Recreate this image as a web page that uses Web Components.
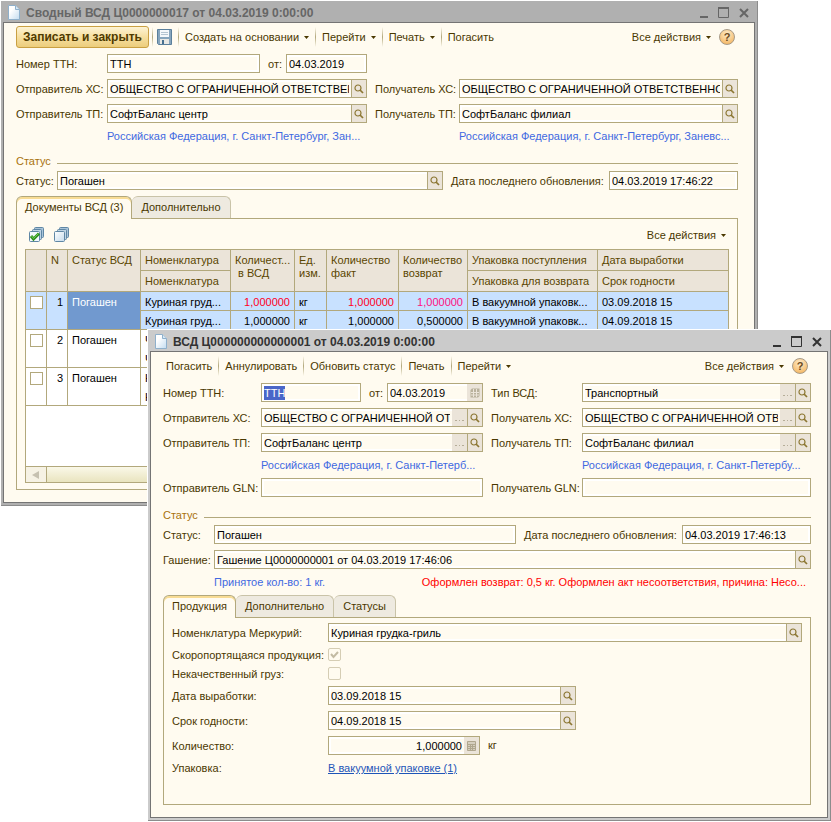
<!DOCTYPE html>
<html lang="ru">
<head>
<meta charset="utf-8">
<title>Сводный ВСД</title>
<style>
  html, body {
    height: 100%;
    margin: 0;
  }

  body {
    background: white;
    color: #4a3800;
    font: 11px/14px "Liberation Sans", Arial, sans-serif;
    overflow: hidden;
    position: relative;
    --line: #b2a87c;
    --paper: #fffbf0;
    --button: #ebe4d9;
  }

  /* two overlapping windows on the desktop */
  #summary {
    left: 1px;
    position: absolute;
    right: 73px;
    top: 1px;
  }

  #document {
    left: 148px;
    position: absolute;
    right: 0;
    top: 330px;
  }

  .columns {
    display: grid;
    gap: 6px 8px;
    grid-template-columns: minmax(0, 1fr) minmax(0, 1fr);
  }

  #summary .columns {
    grid-template-columns: minmax(0, 351fr) minmax(0, 363fr);
  }

  .row {
    display: flex;
    gap: 8px;
  }

  .row > .grow {
    flex: 1;
  }

  .row > .date {
    flex: none;
    --label: 18px;
  }

  .row > .updated {
    flex: none;
    width: 287px;
    --label: 158px;
  }

  .stack {
    display: flex;
    flex-direction: column;
    gap: 6px;
  }

  #summary .left { --label: 91px; }
  #summary .right { --label: 84px; }
  #summary .date { width: 99px; }
  #summary .state { --label: 41px; }
  #document .left { --label: 98px; }
  #document .right { --label: 91px; }
  #document .date { width: 114px; }
  #document .state { --label: 51px; }
  #document .product { --label: 156px; }

  .product .half { width: 404px; }
  .product .quantity { width: 308px; }

  .unit {
    line-height: 19px;
  }

  .notes {
    display: flex;
    justify-content: space-between;
    padding: 0 5px 0 51px;
  }
</style>
</head>
<body>

<app-window id="summary" inactive caption="Сводный ВСД Ц0000000017 от 04.03.2019 0:00:00">
  <tool-bar>
    <tool-button primary>Записать и закрыть</tool-button>
    <tool-button divided icon="save" label="Записать"></tool-button>
    <tool-button divided menu>Создать на основании</tool-button>
    <tool-button divided menu>Перейти</tool-button>
    <tool-button divided menu>Печать</tool-button>
    <tool-button divided>Погасить</tool-button>
    <tool-button slot="end" menu>Все действия</tool-button>
    <help-button slot="end"></help-button>
  </tool-bar>
  <div class="columns">
    <div class="row">
      <form-field class="left grow" label="Номер ТТН:" value="ТТН"></form-field>
      <form-field class="date" label="от:" value="04.03.2019"></form-field>
    </div>
    <span></span>
    <form-field class="left" label="Отправитель ХС:" value="ОБЩЕСТВО С ОГРАНИЧЕННОЙ ОТВЕТСТВЕННОСТЬЮ" buttons="find"></form-field>
    <form-field class="right" label="Получатель ХС:" value="ОБЩЕСТВО С ОГРАНИЧЕННОЙ ОТВЕТСТВЕННОСТЬЮ" buttons="find"></form-field>
    <form-field class="left" label="Отправитель ТП:" value="СофтБаланс центр" buttons="find"></form-field>
    <form-field class="right" label="Получатель ТП:" value="СофтБаланс филиал" buttons="find"></form-field>
    <note-link class="left">Российская Федерация, г. Санкт-Петербург, Зан...</note-link>
    <note-link class="right">Российская Федерация, г. Санкт-Петербург, Заневс...</note-link>
  </div>
  <field-group caption="Статус">
    <div class="row">
      <form-field class="state grow" label="Статус:" value="Погашен" buttons="find"></form-field>
      <form-field class="updated" label="Дата последнего обновления:" value="04.03.2019 17:46:22"></form-field>
    </div>
  </field-group>
  <tab-panel tabs="Документы ВСД (3)|Дополнительно">
    <tool-bar inner>
      <tool-button icon="checkAll" label="Выбрать все"></tool-button>
      <tool-button icon="uncheckAll" label="Снять выбор"></tool-button>
      <tool-button slot="end" menu>Все действия</tool-button>
    </tool-bar>
    <document-list></document-list>
  </tab-panel>
</app-window>

<app-window id="document" caption="ВСД Ц000000000000001 от 04.03.2019 0:00:00">
  <tool-bar flush>
    <tool-button>Погасить</tool-button>
    <tool-button divided>Аннулировать</tool-button>
    <tool-button divided>Обновить статус</tool-button>
    <tool-button divided>Печать</tool-button>
    <tool-button divided menu>Перейти</tool-button>
    <tool-button slot="end" menu>Все действия</tool-button>
    <help-button slot="end"></help-button>
  </tool-bar>
  <div class="columns">
    <div class="row">
      <form-field class="left grow" label="Номер ТТН:" value="ТТН" selected></form-field>
      <form-field class="date" label="от:" value="04.03.2019" buttons="calendar"></form-field>
    </div>
    <form-field class="right" label="Тип ВСД:" value="Транспортный" buttons="more find"></form-field>
    <form-field class="left" label="Отправитель ХС:" value="ОБЩЕСТВО С ОГРАНИЧЕННОЙ ОТВЕТСТВЕННОСТЬЮ" buttons="more find"></form-field>
    <form-field class="right" label="Получатель ХС:" value="ОБЩЕСТВО С ОГРАНИЧЕННОЙ ОТВЕТСТВЕННОСТЬЮ" buttons="more find"></form-field>
    <form-field class="left" label="Отправитель ТП:" value="СофтБаланс центр" buttons="more find"></form-field>
    <form-field class="right" label="Получатель ТП:" value="СофтБаланс филиал" buttons="more find"></form-field>
    <note-link class="left">Российская Федерация, г. Санкт-Петерб...</note-link>
    <note-link class="right">Российская Федерация, г. Санкт-Петербу...</note-link>
    <form-field class="left" label="Отправитель GLN:" value=""></form-field>
    <form-field class="right" label="Получатель GLN:" value=""></form-field>
  </div>
  <field-group caption="Статус">
    <div class="row">
      <form-field class="state grow" label="Статус:" value="Погашен"></form-field>
      <form-field class="updated" label="Дата последнего обновления:" value="04.03.2019 17:46:13"></form-field>
    </div>
    <form-field class="state" label="Гашение:" value="Гашение Ц0000000001 от 04.03.2019 17:46:06" buttons="find"></form-field>
    <div class="notes">
      <note-link style="--label: 0px">Принятое кол-во: 1 кг.</note-link>
      <note-link style="--label: 0px" warning>Оформлен возврат: 0,5 кг. Оформлен акт несоответствия, причина: Несо...</note-link>
    </div>
  </field-group>
  <tab-panel tabs="Продукция|Дополнительно|Статусы" roomy>
    <div class="stack product">
      <form-field label="Номенклатура Меркурий:" value="Куриная грудка-гриль" buttons="find"></form-field>
      <check-field label="Скоропортящаяся продукция:" checked></check-field>
      <check-field label="Некачественный груз:"></check-field>
      <form-field class="half" label="Дата выработки:" value="03.09.2018 15" buttons="find"></form-field>
      <form-field class="half" label="Срок годности:" value="04.09.2018 15" buttons="find"></form-field>
      <div class="row">
        <form-field class="quantity" label="Количество:" value="1,000000" buttons="calculator" numeric></form-field>
        <span class="unit">кг</span>
      </div>
      <note-link label="Упаковка:" underlined>В вакуумной упаковке (1)</note-link>
    </div>
  </tab-panel>
</app-window>

<script>
const icons = {
  page: `<svg width="12" height="15" viewBox="0 0 12 15">
    <defs><linearGradient id="p" x2="1" y2="1"><stop offset=".3" stop-color="#fff"/><stop offset="1" stop-color="#c3dcf0"/></linearGradient></defs>
    <path d="M.5.5h7l4 4v10H.5z" fill="url(#p)" stroke="#8fb0cb"/>
    <path d="M7.500.5v4h4" fill="#d7e8f5" stroke="#8fb0cb"/></svg>`,
  save: `<svg width="16" height="16" viewBox="0 0 16 16">
    <path d="M.5.5h14v15H1.500l-1-1z" fill="#86a5bd" stroke="#5a7f9b"/>
    <path d="M3 1h9v7H3z" fill="#f4f8fb"/>
    <path d="M4 3.500h7M4 5.500h7" stroke="#b4c5d2"/>
    <path d="M3 10h9v5H3z" fill="#e8e8e4"/>
    <path d="M5 11h2v4H5z" fill="#47708f"/></svg>`,
  checkAll: `<svg width="16" height="16" viewBox="0 0 16 16">
    <rect x="5.500" y=".5" width="9" height="10" rx="1" fill="#a9c4d9" stroke="#5f87a5"/>
    <rect x="3.500" y="2.500" width="9" height="10" rx="1" fill="#bfd4e4" stroke="#5f87a5"/>
    <rect x=".5" y="4.500" width="10" height="10" rx="1" fill="#f3f9fd" stroke="#5f87a5"/>
    <path d="M2 9l2.500 3L10 6.500" fill="none" stroke="#2f8f1f" stroke-width="3"/>
    <path d="M2.500 9l2 2.500L9.500 6.500" fill="none" stroke="#6fce50"/></svg>`,
  uncheckAll: `<svg width="16" height="16" viewBox="0 0 16 16">
    <defs><linearGradient id="u" x2="1" y2="1"><stop stop-color="#fff"/><stop offset="1" stop-color="#c5dbec"/></linearGradient></defs>
    <rect x="5.500" y=".5" width="9" height="10" rx="1" fill="#a9c4d9" stroke="#5f87a5"/>
    <rect x="3.500" y="2.500" width="9" height="10" rx="1" fill="#bfd4e4" stroke="#5f87a5"/>
    <rect x=".5" y="4.500" width="10" height="10" rx="1" fill="url(#u)" stroke="#5f87a5"/></svg>`,
  find: `<svg width="10" height="10" viewBox="0 0 10 10" fill="none" stroke="#8c7733">
    <circle cx="4" cy="4" r="3" stroke-width="1.200"/><path d="M6 6l3 3" stroke-width="1.700"/></svg>`,
  more: `<svg width="9" height="9" viewBox="0 0 9 9"><path d="M0 7h2v1H0zM4 7h1v1H4zM7 7h2v1H7z" fill="#b5ad98"/></svg>`,
  calendar: `<svg width="10" height="10" viewBox="0 0 10 10">
    <path d="M2 .5h7.500V8L8 9.500H.5V2z" fill="#b9b19c"/>
    <path d="M1 4.500h8M1 7h8M3.500 1v8M6.500 1v8" stroke="#ebe4d9"/></svg>`,
  calculator: `<svg width="9" height="10" viewBox="0 0 9 10">
    <path d="M.5.5h8v9h-8z" fill="#d6cfbf" stroke="#b0a78e"/>
    <path d="M1 3.500h7M1 5.500h7M1 7.500h7M3.500 4v5M5.500 4v5" stroke="#b0a78e"/></svg>`,
  arrow: `<svg width="5" height="3" viewBox="0 0 5 3"><path d="M0 0h5L2.500 3z" fill="#4a3800"/></svg>`
};

const buttonNames = {
  find: 'Открыть',
  more: 'Выбрать',
  calendar: 'Календарь',
  calculator: 'Калькулятор'
};

class AppWindow extends HTMLElement {
  constructor() {
    super();

    const shadowRoot = this.attachShadow({mode: 'open'});
    shadowRoot.innerHTML = `
      <style>
        :host {
          background: #cbcbcb;
          border-bottom: 1px solid #8c8c8c;
          border-right: 1px solid #8c8c8c;
          box-shadow: 0 0 0 1px white;
          box-sizing: border-box;
          color: #333;
          display: block;
          padding: 0 2px 2px;
        }

        :host([inactive]) {
          background: #b0b0b0;
          color: #666;
        }

        header {
          align-items: center;
          display: flex;
          gap: 6px;
          height: 21px;
          padding: 2px 5px 0;
          box-sizing: border-box;
        }

        h1 {
          flex: 1;
          font-size: 12px;
          line-height: 16px;
          margin: 0;
          white-space: nowrap;
        }

        header button {
          background: none;
          border: none;
          color: inherit;
          display: flex;
          height: 12px;
          padding: 0;
          width: 12px;
        }

        .controls {
          display: flex;
          gap: 8px;
        }

        main {
          background: var(--paper);
          border: 1px solid #747474;
          color: #4a3800;
          display: flex;
          flex-direction: column;
          gap: 6px;
          padding: 3px 16px 12px 12px;
        }
      </style>
      <header>
        ${icons.page}
        <h1></h1>
        <div class="controls">
          <button aria-label="Свернуть"><svg width="12" height="12"><path d="M2 10h8" stroke="currentColor" stroke-width="2"/></svg></button>
          <button aria-label="Развернуть"><svg width="12" height="12"><path d="M.5 1.500h10v9H.5z" fill="none" stroke="currentColor"/><path d="M0 1h11" stroke="currentColor" stroke-width="2"/></svg></button>
          <button aria-label="Закрыть"><svg width="12" height="12"><path d="M2 2l8 8M10 2l-8 8" stroke="currentColor" stroke-width="2"/></svg></button>
        </div>
      </header>
      <main><slot></slot></main>
    `;
    shadowRoot.querySelector('h1').textContent = this.getAttribute('caption');
  }
}

class ToolBar extends HTMLElement {
  constructor() {
    super();

    const shadowRoot = this.attachShadow({mode: 'open'});
    shadowRoot.innerHTML = `
      <style>
        :host {
          align-items: center;
          display: flex;
          height: 22px;
          justify-content: space-between;
          padding-right: 3px;
        }

        :host([flush]) {
          margin-left: -3px;
        }

        :host([inner]) {
          margin-right: -3px;
          padding-right: 0;
        }

        div {
          align-items: center;
          display: flex;
        }
      </style>
      <div><slot></slot></div>
      <div><slot name="end"></slot></div>
    `;
  }
}

class ToolButton extends HTMLElement {
  constructor() {
    super();

    const shadowRoot = this.attachShadow({mode: 'open'});
    shadowRoot.innerHTML = `
      <style>
        :host {
          align-items: center;
          display: flex;
        }

        :host([divided])::before {
          background: linear-gradient(transparent, var(--line), transparent);
          content: '';
          height: 20px;
          width: 1px;
        }

        button {
          align-items: center;
          background: none;
          border: none;
          color: inherit;
          display: flex;
          font: inherit;
          gap: 5px;
          height: 22px;
          padding: 0 6px;
          white-space: nowrap;
        }

        :host([icon]) button {
          padding: 0 5px 0 4px;
        }

        :host([primary]) button {
          background: linear-gradient(#fdf3d4, #f6dfa0 50%, #eccd7c);
          border: 1px solid #c9a042;
          border-radius: 3px;
          color: #4f3a00;
          font-size: 12px;
          font-weight: bold;
          margin-right: 3px;
        }
      </style>
      <button type="button"><slot></slot></button>
    `;

    const button = shadowRoot.querySelector('button');
    if (this.hasAttribute('icon')) {
      button.innerHTML = icons[this.getAttribute('icon')];
      button.setAttribute('aria-label', this.getAttribute('label'));
    }
    if (this.hasAttribute('menu')) {
      button.insertAdjacentHTML('beforeend', icons.arrow);
    }
  }
}

class HelpButton extends HTMLElement {
  constructor() {
    super();

    const shadowRoot = this.attachShadow({mode: 'open'});
    shadowRoot.innerHTML = `
      <style>
        :host {
          display: block;
          margin-left: 2px;
        }

        button {
          background: radial-gradient(circle at 50% 30%, #fdeccb, #f5b763 85%);
          border: 1px solid #a89a86;
          border-radius: 50%;
          color: #6b4a1c;
          display: block;
          font: bold 11px/14px "Liberation Sans", Arial, sans-serif;
          height: 16px;
          padding: 0;
          width: 16px;
        }
      </style>
      <button type="button">?</button>
    `;
  }
}

class FormField extends HTMLElement {
  constructor() {
    super();

    const shadowRoot = this.attachShadow({mode: 'open'});
    shadowRoot.innerHTML = `
      <style>
        :host {
          align-items: center;
          display: flex;
          min-width: 0;
        }

        label {
          flex: none;
          white-space: nowrap;
          width: var(--label);
        }

        .box {
          background: var(--paper);
          border: 1px solid var(--line);
          box-shadow: inset 0 0 0 2px white;
          box-sizing: border-box;
          display: flex;
          flex: 1;
          height: 19px;
          min-width: 0;
        }

        input {
          background: none;
          border: none;
          color: black;
          flex: 1;
          font: inherit;
          min-width: 0;
          outline: none;
          padding: 0 2px;
        }

        input::selection {
          background: #4a66c8;
          color: white;
        }

        :host([numeric]) input {
          text-align: right;
        }

        button {
          align-items: center;
          background: var(--button);
          border: none;
          display: flex;
          flex: none;
          justify-content: center;
          padding: 0;
          width: 15px;
        }

        .find {
          border-left: 1px solid var(--line);
        }
      </style>
      <label for="value"></label>
      <div class="box"><input id="value" type="text" readonly></div>
    `;

    shadowRoot.querySelector('label').textContent = this.getAttribute('label');
    this.input = shadowRoot.querySelector('input');
    this.input.value = this.getAttribute('value');

    const names = (this.getAttribute('buttons') || '').split(' ').filter(Boolean);
    names.forEach(name => {
      const button = document.createElement('button');
      button.type = 'button';
      button.className = name;
      button.innerHTML = icons[name];
      button.setAttribute('aria-label', buttonNames[name]);
      shadowRoot.querySelector('.box').appendChild(button);
    });
  }

  connectedCallback() {
    if (this.hasAttribute('selected')) {
      this.input.focus();
      this.input.select();
    }
  }
}

class CheckField extends HTMLElement {
  constructor() {
    super();

    const shadowRoot = this.attachShadow({mode: 'open'});
    shadowRoot.innerHTML = `
      <style>
        :host {
          align-items: center;
          display: flex;
          height: 13px;
        }

        label {
          white-space: nowrap;
          width: var(--label);
        }

        input {
          appearance: none;
          border: 1px solid #d5cdb4;
          border-radius: 2px;
          box-sizing: border-box;
          height: 13px;
          margin: 0;
          width: 13px;
        }

        .mark {
          display: grid;
        }

        .mark > * {
          grid-area: 1 / 1;
        }

        svg {
          display: none;
          pointer-events: none;
        }

        input:checked + svg {
          display: block;
        }
      </style>
      <label for="check"></label>
      <div class="mark">
        <input id="check" type="checkbox" disabled>
        <svg width="13" height="13"><path d="M3 6l2.500 3L10 4" fill="none" stroke="#c3bba4" stroke-width="2"/></svg>
      </div>
    `;
    shadowRoot.querySelector('label').textContent = this.getAttribute('label');
    shadowRoot.querySelector('input').checked = this.hasAttribute('checked');
  }
}

class NoteLink extends HTMLElement {
  constructor() {
    super();

    const shadowRoot = this.attachShadow({mode: 'open'});
    shadowRoot.innerHTML = `
      <style>
        :host {
          display: flex;
          min-width: 0;
          white-space: nowrap;
        }

        span {
          flex: none;
          width: var(--label);
        }

        a {
          color: #4169e1;
          text-decoration: none;
        }

        :host([warning]) a {
          color: red;
        }

        :host([underlined]) a {
          color: #1e55b8;
          text-decoration: underline;
        }
      </style>
      <span></span>
      <a href="#"><slot></slot></a>
    `;
    shadowRoot.querySelector('span').textContent = this.getAttribute('label') || '';
  }
}

class FieldGroup extends HTMLElement {
  constructor() {
    super();

    const shadowRoot = this.attachShadow({mode: 'open'});
    shadowRoot.innerHTML = `
      <style>
        :host {
          display: flex;
          flex-direction: column;
          gap: 3px;
          margin-top: 5px;
        }

        h2 {
          align-items: center;
          color: #a8720d;
          display: flex;
          font: inherit;
          gap: 6px;
          margin: 0;
        }

        h2::after {
          background: var(--line);
          content: '';
          flex: 1;
          height: 1px;
          margin-top: 4px;
        }

        div {
          display: flex;
          flex-direction: column;
          gap: 6px;
        }
      </style>
      <h2></h2>
      <div><slot></slot></div>
    `;
    shadowRoot.querySelector('h2').textContent = this.getAttribute('caption');
  }
}

class TabPanel extends HTMLElement {
  constructor() {
    super();

    const shadowRoot = this.attachShadow({mode: 'open'});
    shadowRoot.innerHTML = `
      <style>
        :host {
          display: block;
        }

        nav {
          display: flex;
          position: relative;
        }

        button {
          background: #eeeae0;
          border: 1px solid #c9c3a8;
          border-bottom: none;
          border-left: none;
          border-radius: 6px 6px 0 0;
          color: inherit;
          font: inherit;
          height: 22px;
          padding: 0 9px 1px;
          white-space: nowrap;
        }

        button[aria-selected=true] {
          background: var(--paper);
          border: 1px solid var(--line);
          border-bottom: none;
          box-shadow: inset 0 2px #f8dc94;
          height: 23px;
          margin-bottom: -1px;
          padding: 0 8px 2px;
        }

        section {
          border: 1px solid var(--line);
          padding: 5px 8px 6px;
        }

        :host([roomy]) section {
          padding-bottom: 29px;
        }
      </style>
      <nav role="tablist"></nav>
      <section><slot></slot></section>
    `;

    this.getAttribute('tabs').split('|').forEach((name, index) => {
      const button = document.createElement('button');
      button.type = 'button';
      button.setAttribute('role', 'tab');
      button.setAttribute('aria-selected', index === 0);
      button.textContent = name;
      shadowRoot.querySelector('nav').appendChild(button);
    });
  }
}

class DocumentList extends HTMLElement {
  constructor() {
    super();

    const shadowRoot = this.attachShadow({mode: 'open'});
    shadowRoot.innerHTML = `
      <style>
        :host {
          background: white;
          border: 1px solid var(--line);
          box-sizing: border-box;
          display: flex;
          flex-direction: column;
          justify-content: space-between;
          margin-top: 3px;
          min-height: 234px;
        }

        table {
          border-collapse: separate;
          border-spacing: 0;
          color: black;
          line-height: 13px;
          table-layout: fixed;
          width: 100%;
        }

        th, td {
          border-bottom: 1px solid var(--line);
          border-right: 1px solid var(--line);
          box-sizing: border-box;
          height: 19px;
          overflow: hidden;
          padding: 0 4px;
          text-align: left;
          vertical-align: top;
          white-space: nowrap;
        }

        th {
          background: #ebe4d9;
          color: #5a4600;
          font-weight: normal;
          height: 21px;
          padding-top: 4px;
        }

        td {
          padding-top: 4px;
        }

        th:last-child, .last {
          border-right: none;
        }

        .number {
          text-align: right;
        }

        .plan td:nth-child(n + 4) {
          border-bottom-color: transparent;
        }

        .current td {
          background: #c8e1ff;
        }

        .current.plan td {
          border-bottom-color: var(--line);
        }

        .current .status {
          background: #7199cf;
          color: white;
        }

        .red { color: #ff0022; }
        .pink { color: #ff1080; }

        input {
          appearance: none;
          background: white;
          border: 1px solid var(--line);
          display: block;
          height: 13px;
          margin: 0;
          width: 13px;
          box-sizing: border-box;
        }

        .scroll {
          background: linear-gradient(#f1edd6, #faf8ec);
          border-top: 1px solid var(--line);
          display: flex;
          height: 15px;
        }

        .scroll button {
          background: #f6f2e4;
          border: none;
          border-right: 1px solid var(--line);
          padding: 0;
          width: 21px;
        }

        .scroll div {
          background: linear-gradient(#faf8e8, #e9e4bf);
          flex: 1;
        }
      </style>
      <table>
        <colgroup>
          <col style="width: 21px"><col style="width: 21px"><col style="width: 73px">
          <col style="width: 90px"><col style="width: 64px"><col style="width: 32px">
          <col style="width: 72px"><col style="width: 69px"><col style="width: 130px"><col>
        </colgroup>
        <thead>
          <tr>
            <th rowspan="2"></th>
            <th rowspan="2">N</th>
            <th rowspan="2">Статус ВСД</th>
            <th>Номенклатура</th>
            <th rowspan="2">Количест...<br>&nbsp;в ВСД</th>
            <th rowspan="2">Ед.<br>изм.</th>
            <th rowspan="2">Количество<br>факт</th>
            <th rowspan="2">Количество<br>возврат</th>
            <th>Упаковка поступления</th>
            <th>Дата выработки</th>
          </tr>
          <tr>
            <th>Номенклатура</th>
            <th>Упаковка для возврата</th>
            <th>Срок годности</th>
          </tr>
        </thead>
        <tbody></tbody>
      </table>
      <div class="scroll">
        <button type="button" aria-label="Влево"><svg width="8" height="8"><path d="M7 0v8L0 4z" fill="#c6c1b0"/></svg></button>
        <div></div>
      </div>
    `;

    const body = shadowRoot.querySelector('tbody');
    body.innerHTML =
      this.rows(1, 'Куриная груд...', true) +
      this.rows(2, 'Ч...', false) +
      this.rows(3, 'К...', false);
  }

  rows(number, product, current) {
    const mark = current ? 'current' : '';
    const full = current ? '1,000000' : '';
    const unit = current ? 'кг' : '';
    const pack = current ? 'В вакуумной упаковк...' : '';
    return `
      <tr class="plan ${mark}">
        <td rowspan="2"><input type="checkbox" aria-label="Строка ${number}"></td>
        <td rowspan="2" class="number">${number}</td>
        <td rowspan="2" class="status">Погашен</td>
        <td>${product}</td>
        <td class="number red">${full}</td>
        <td>${unit}</td>
        <td class="number red">${full}</td>
        <td class="number pink">${full}</td>
        <td>${pack}</td>
        <td class="last">${current ? '03.09.2018 15' : ''}</td>
      </tr>
      <tr class="${mark}">
        <td>${product}</td>
        <td class="number">${full}</td>
        <td>${unit}</td>
        <td class="number">${full}</td>
        <td class="number">${current ? '0,500000' : ''}</td>
        <td>${pack}</td>
        <td class="last">${current ? '04.09.2018 15' : ''}</td>
      </tr>
    `;
  }
}

customElements.define('app-window', AppWindow);
customElements.define('tool-bar', ToolBar);
customElements.define('tool-button', ToolButton);
customElements.define('help-button', HelpButton);
customElements.define('form-field', FormField);
customElements.define('check-field', CheckField);
customElements.define('note-link', NoteLink);
customElements.define('field-group', FieldGroup);
customElements.define('tab-panel', TabPanel);
customElements.define('document-list', DocumentList);
</script>
</body>
</html>
